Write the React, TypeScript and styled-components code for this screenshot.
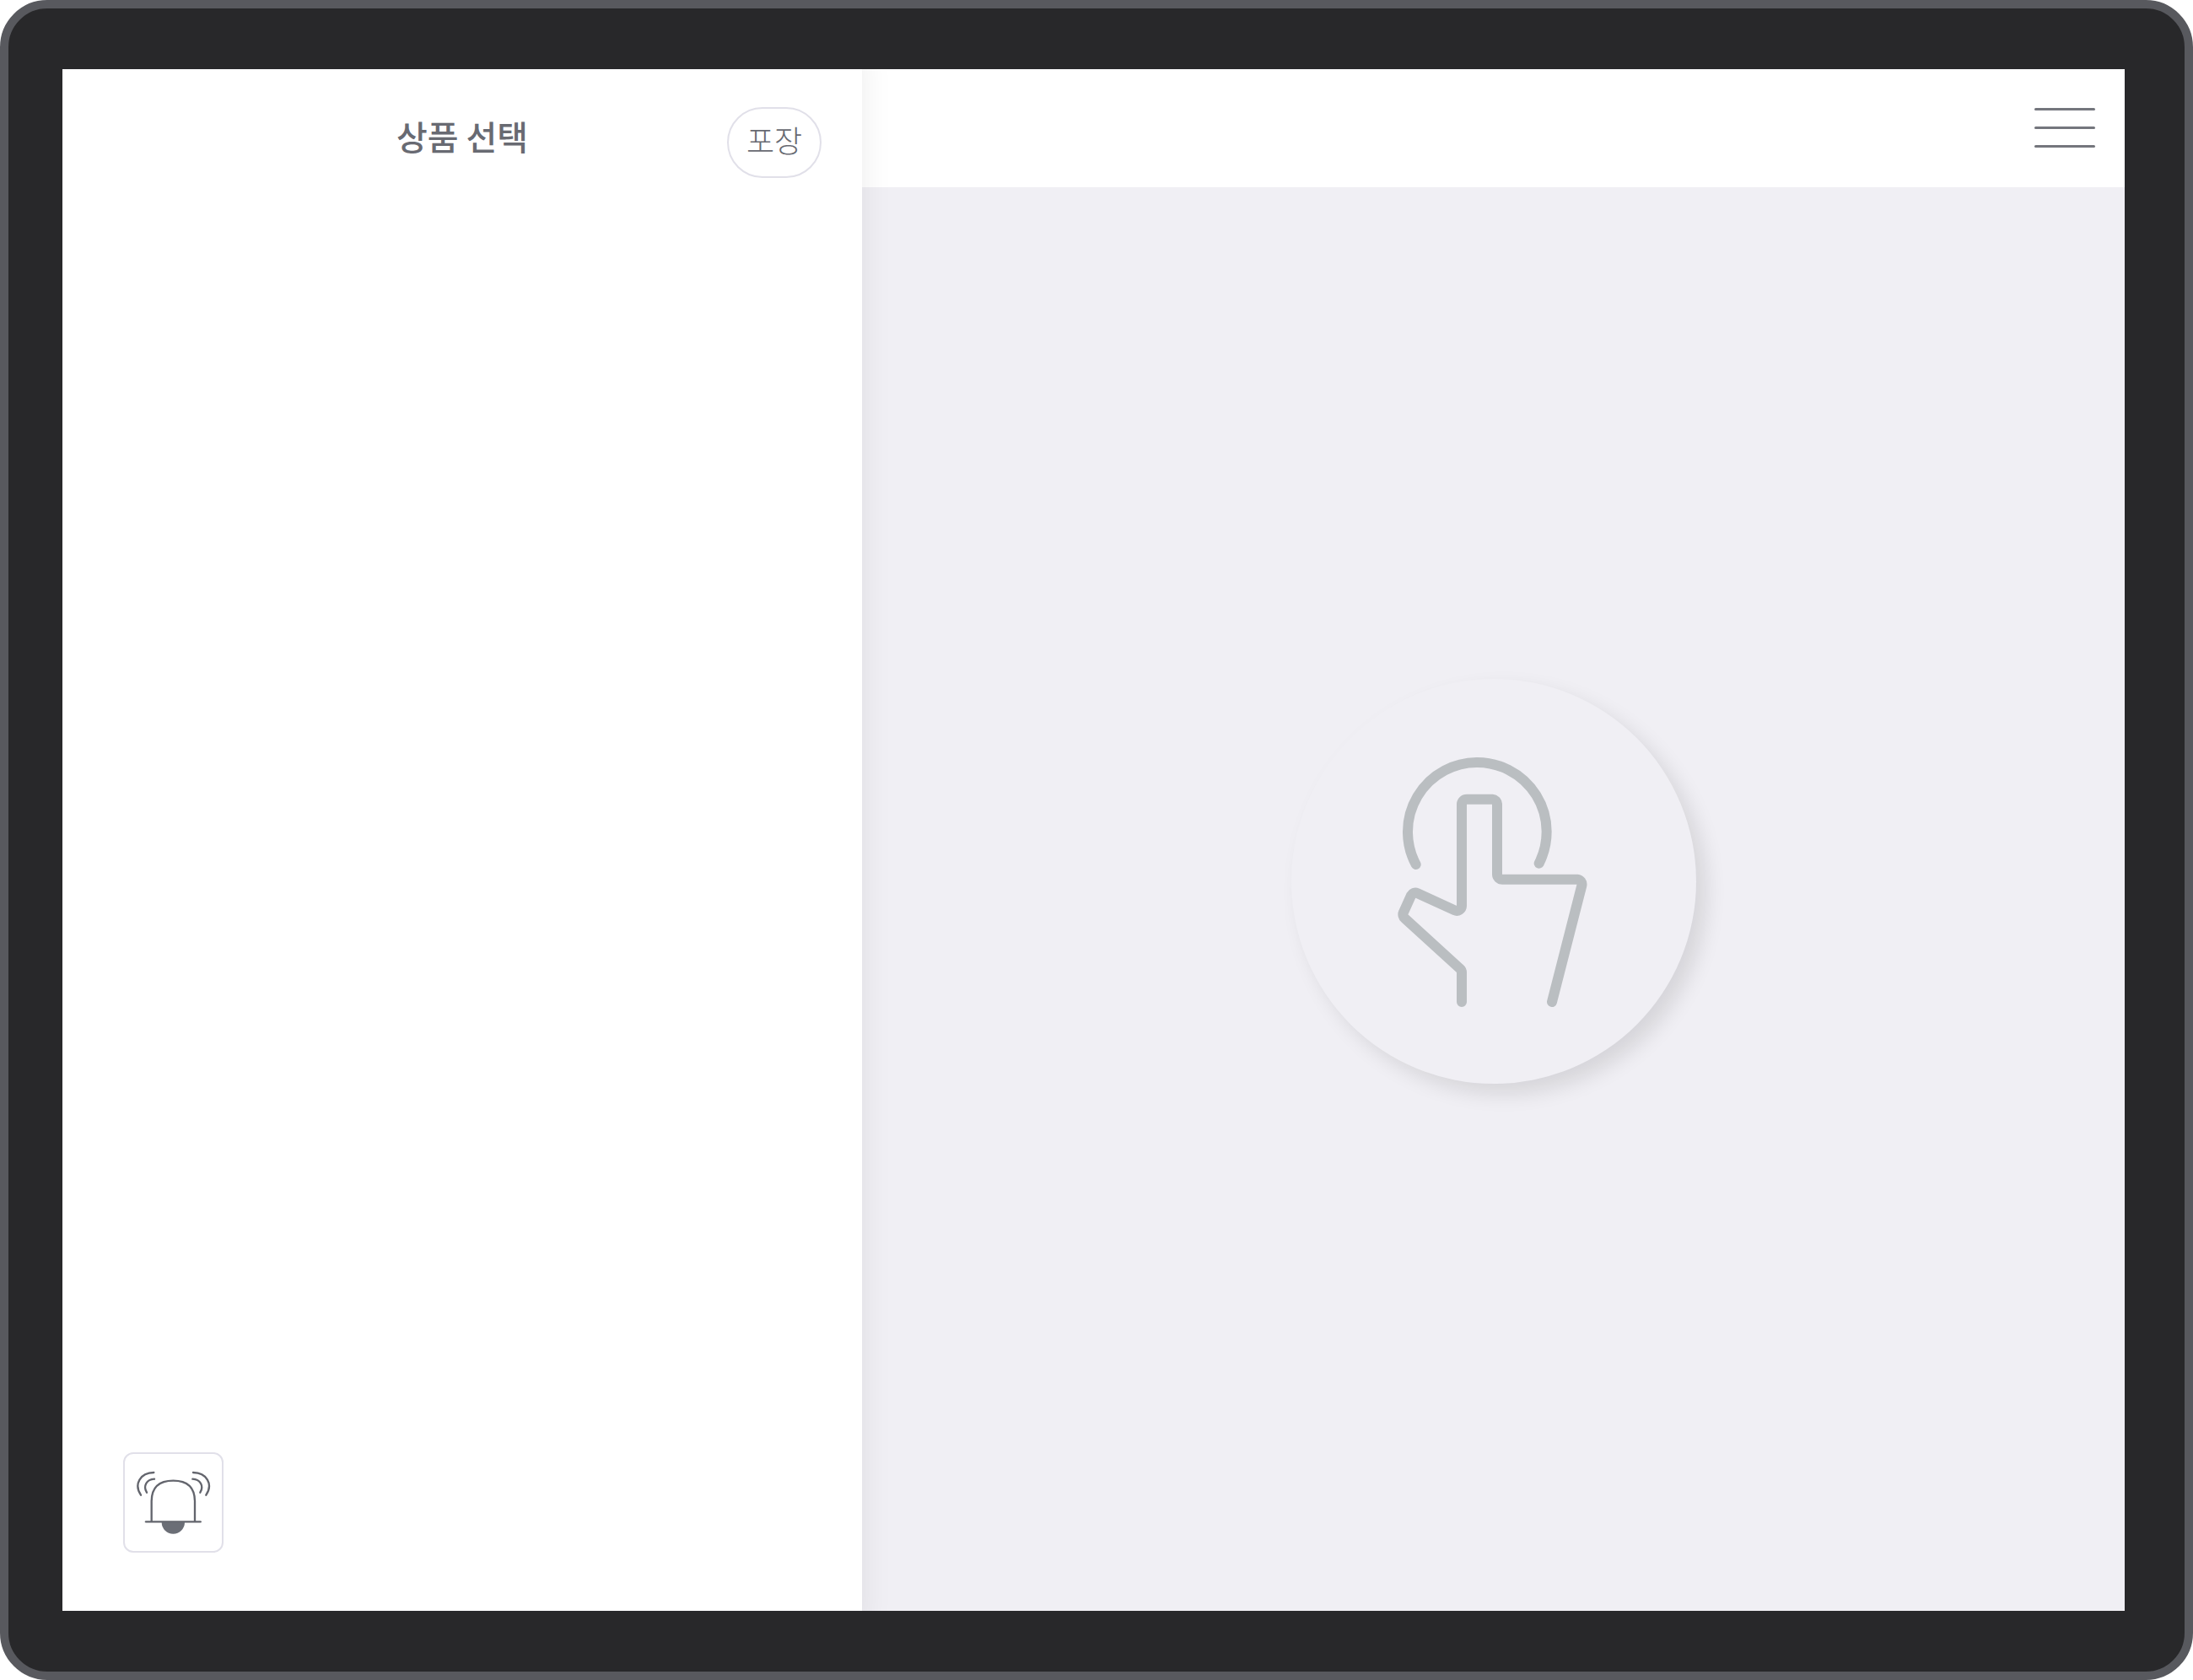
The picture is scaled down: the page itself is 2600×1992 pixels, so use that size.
import React from "react";
import styled, { createGlobalStyle } from "styled-components";

const ink = "#686a72";
const line = "#e1e0e9";
const canvas = "#f0eff4";

const GlobalStyle = createGlobalStyle`
  *, *::before, *::after { box-sizing: border-box; }
  html, body { margin: 0; background: #ffffff; }
  body, button { font-family: "Noto Sans CJK KR", "Noto Sans", sans-serif; color: ${ink}; }
`;

const Device = styled.div`
  display: flex;
  min-height: 100vh;
  padding: 72px 71px 72px 64px;
  border: 10px solid #58595e;
  border-radius: 56px;
  background: #28282a;
`;

const Screen = styled.div`
  flex: 1;
  display: grid;
  grid-template-columns: 948fr 1497fr;
  background: #ffffff;
`;

const OrderPanel = styled.aside`
  position: relative;
  z-index: 1;
  display: flex;
  flex-direction: column;
  justify-content: space-between;
  background: #ffffff;
  clip-path: inset(0 -48px 0 0);
  box-shadow: -24px 0 36px 24px rgba(0, 0, 0, 0.08);
`;

const PanelHeader = styled.header`
  display: grid;
  grid-template-columns: 1fr auto 1fr;
  align-items: start;
  padding: 45px 48px 0;
`;

const Title = styled.h1`
  grid-column: 2;
  margin: 0;
  font-size: 40px;
  font-weight: 500;
  line-height: 68px;
`;

const PillButton = styled.button`
  justify-self: end;
  width: 112px;
  height: 84px;
  padding: 0 0 8px;
  border: 2px solid ${line};
  border-radius: 42px;
  background: #ffffff;
  font-size: 36px;
  font-weight: 300;
  line-height: 48px;
  cursor: pointer;
`;

const PanelFooter = styled.footer`
  display: flex;
  padding: 0 72px 69px;
`;

const BellButton = styled.button`
  display: flex;
  align-items: center;
  justify-content: center;
  width: 119px;
  height: 119px;
  padding: 0;
  border: 2px solid ${line};
  border-radius: 12px;
  background: #ffffff;
  cursor: pointer;
`;

const Workspace = styled.div`
  display: flex;
  flex-direction: column;
  background: ${canvas};
`;

const TopBar = styled.header`
  display: flex;
  align-items: center;
  justify-content: flex-end;
  height: 140px;
  padding: 0 35px 2px;
  background: #ffffff;
`;

const MenuButton = styled.button`
  display: flex;
  flex-direction: column;
  gap: 19px;
  padding: 0;
  border: 0;
  background: none;
  cursor: pointer;
`;

const MenuLine = styled.span`
  width: 72px;
  height: 3px;
  border-radius: 2px;
  background: #74767d;
`;

const Stage = styled.main`
  flex: 1;
  display: flex;
  align-items: center;
  justify-content: center;
  padding-bottom: 42px;
`;

const TouchButton = styled.button`
  display: flex;
  align-items: center;
  justify-content: center;
  width: 480px;
  height: 480px;
  padding: 0;
  border: 0;
  border-radius: 50%;
  background: ${canvas};
  box-shadow: 12px 12px 24px rgba(0, 0, 0, 0.11);
  cursor: pointer;
`;

const BellIcon = () => (
  <svg width="92" height="79" viewBox="89 125 276 237" fill="none" stroke="#63656d" strokeWidth="7" strokeLinecap="round" aria-hidden="true">
    <path d="M148 310V240C148 190 175 166 225 166S302 190 302 240V310" />
    <path d="M128 312H322" />
    <path d="M184 314A41 41 0 0 0 266 314Z" fill="#6b6e76" stroke="none" />
    <path d="M156 137C108 138 84 178 110 217" />
    <path d="M158 160C130 161 117 186 131 208" />
    <path d="M296 137C344 138 368 178 342 217" />
    <path d="M294 160C322 161 335 186 321 208" />
  </svg>
);

const TouchIcon = () => (
  <svg width="230" height="300" viewBox="48 45 690 900" fill="none" stroke="#babec1" strokeWidth="36" strokeLinecap="round" aria-hidden="true">
    <path d="M116 435A247 247 0 1 1 554 431" />
    <path d="M279 924V820Q279 811 272 805L77 627A18 18 0 0 1 72 605L99 545A18 18 0 0 1 121 537L254 598A18 18 0 0 0 279 582V220A18 18 0 0 1 297 203H388A18 18 0 0 1 405 220V471A18 18 0 0 0 423 488H690A18 18 0 0 1 706 510L600 924" />
  </svg>
);

export default function App() {
  return (
    <>
      <GlobalStyle />
      <Device>
        <Screen>
          <OrderPanel>
            <PanelHeader>
              <Title>상품 선택</Title>
              <PillButton type="button">포장</PillButton>
            </PanelHeader>
            <PanelFooter>
              <BellButton type="button" aria-label="직원 호출">
                <BellIcon />
              </BellButton>
            </PanelFooter>
          </OrderPanel>
          <Workspace>
            <TopBar>
              <MenuButton type="button" aria-label="메뉴">
                <MenuLine />
                <MenuLine />
                <MenuLine />
              </MenuButton>
            </TopBar>
            <Stage>
              <TouchButton type="button" aria-label="화면 터치">
                <TouchIcon />
              </TouchButton>
            </Stage>
          </Workspace>
        </Screen>
      </Device>
    </>
  );
}
